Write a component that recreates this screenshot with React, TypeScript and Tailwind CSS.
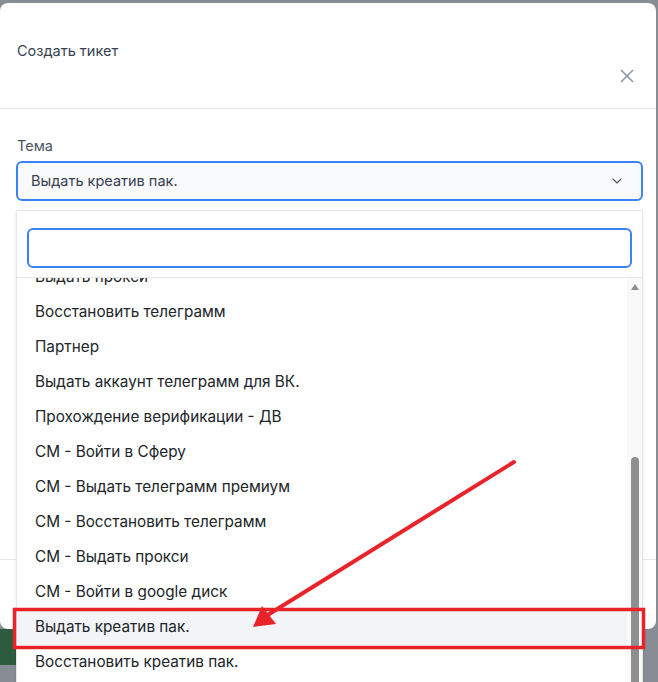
import { X, ChevronDown } from "lucide-react"

const topics = [
  "Выдать прокси",
  "Восстановить телеграмм",
  "Партнер",
  "Выдать аккаунт телеграмм для ВК.",
  "Прохождение верификации - ДВ",
  "СМ - Войти в Сферу",
  "СМ - Выдать телеграмм премиум",
  "СМ - Восстановить телеграмм",
  "СМ - Выдать прокси",
  "СМ - Войти в google диск",
  "Выдать креатив пак.",
  "Восстановить креатив пак.",
]

const selected = "Выдать креатив пак."

function TopicDropdown() {
  return (
    <div className="absolute left-[16px] top-[210px] w-[627px] h-[480px] bg-white border border-[#e5e7eb] shadow-sm flex flex-col">
      {/* поиск */}
      <div className="px-[10px] pt-[17px] pb-[9px] border-b border-[#e5e7eb]">
        <input
          className="w-full h-[40px] rounded-md border-2 border-[#3b82f6] bg-white px-3 text-[14px] outline-none"
          defaultValue=""
        />
      </div>

      <div className="flex flex-1 overflow-hidden">
        <ul className="flex-1 -mt-[18px]">
          {topics.map((t, i) => (
            <li
              key={t + i}
              className={
                "h-[35px] flex items-center pl-[18px] text-[15.3px] text-[#212529] " +
                (i === 10 ? "bg-[#f2f4f7]" : "")
              }
            >
              {t}
            </li>
          ))}
        </ul>

        {/* scrollbar */}
        <div className="w-[15px] bg-[#f9f9f9] flex flex-col items-center pt-[6px]">
          <div className="w-0 h-0 border-l-[4px] border-r-[4px] border-b-[6px] border-l-transparent border-r-transparent border-b-[#8f8f8f]" />
          <div className="mt-[167px] w-[8px] flex-1 rounded-full bg-[#8f8f8f]" />
        </div>
      </div>
    </div>
  )
}

function Annotation() {
  return (
    <svg className="absolute inset-0 pointer-events-none" width="658" height="682">
      <rect x="14.5" y="609.5" width="629" height="38" fill="none" stroke="#e8242a" strokeWidth="3.5" />
      <line x1="514" y1="462" x2="266" y2="616" stroke="#e8242a" strokeWidth="4" strokeLinecap="round" />
      <polygon points="253,627 262,606 276,624" fill="#e8242a" />
    </svg>
  )
}

export default function App() {
  return (
    <div className="relative w-[658px] h-[682px] overflow-hidden bg-[#878c95]" style={{ fontFamily: "Inter, 'Noto Sans', sans-serif" }}>
      <div className="h-[3px]" />

      {/* модалка */}
      <div className="w-[656px] h-[626px] bg-white rounded-lg flex flex-col">
        <div className="h-[106px] border-b border-[#e5e7eb] flex justify-between pl-[17px] pr-[18px]">
          <div className="pt-[37px] text-[14.5px] text-[#374151]">Создать тикет</div>
          <button className="mt-[59px] h-[28px] text-[#8d99ab]">
            <X size={22} strokeWidth={1.8} />
          </button>
        </div>

        <div className="flex-1 px-[16px] pt-[26px]">
          <div className="pl-[1px] text-[14.5px] text-[#4b5563]">Тема</div>
          <div className="mt-[4px] h-[40px] w-[627px] rounded-md border-2 border-[#3b82f6] bg-[#f9fafb] flex items-center justify-between pl-[13px] pr-[16px]">
            <span className="text-[14.5px] text-[#374151]">{selected}</span>
            <ChevronDown size={16} strokeWidth={1.6} className="text-[#4b5563]" />
          </div>
        </div>

        <div className="h-[70px] border-t border-[#e5e7eb] flex justify-end pr-[13px] pt-[16px]">
          <button className="h-[30px] px-6 rounded-md border-2 border-[#3b82f6] text-[#3b82f6] text-[14px]">Создать</button>
        </div>
      </div>

      {/* фон под модалкой */}
      <div className="flex h-[60px]">
        <div className="w-[220px] h-[36px] bg-[#2c5b3d] rounded-tr-2xl" />
        <div className="flex-1" />
      </div>

      <TopicDropdown />
      <Annotation />
    </div>
  )
}
